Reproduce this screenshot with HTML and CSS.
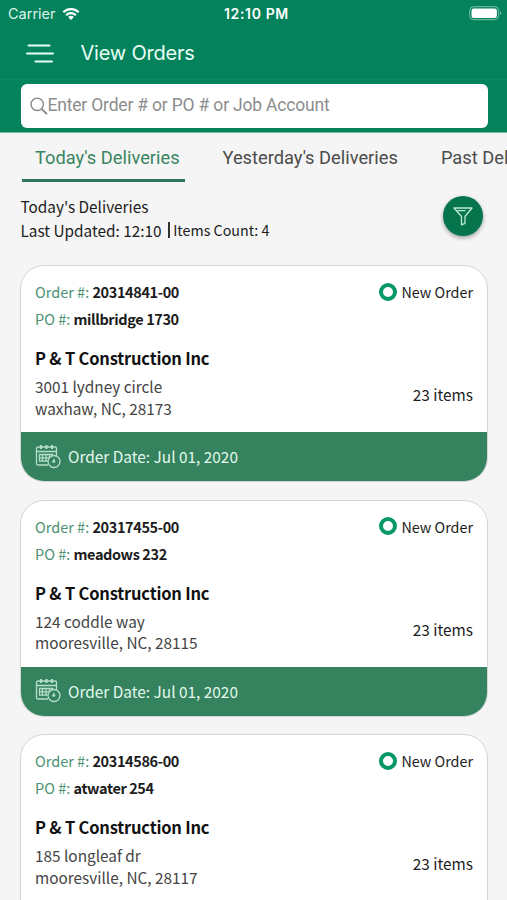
FILE: index.html
```html
<!DOCTYPE html>
<html lang="en">
<head>
<meta charset="utf-8">
<title>View Orders</title>
<link rel="stylesheet" href="styles.css">
</head>
<body>
<svg class="defs" aria-hidden="true">
  <symbol id="calendar" viewBox="0 0 26 26">
    <g fill="none" stroke="currentColor" stroke-width="1.300">
      <path d="M13 21H3a1.500 1.500 0 0 1-1.500-1.500V4.500A1.500 1.500 0 0 1 3 3h17a1.500 1.500 0 0 1 1.500 1.500V11.500M1.500 7.500h20"/>
      <path d="M6 1v4M11.500 1v4M17 1v4" stroke-width="2"/>
      <path d="M4 10.500h14M4 13.800h10M4 17.200h8.500M4.500 10.500v6.700M7.500 10.500v6.700M11 10.500v6.700M14.500 10.500v2.500M18 10.500v1"/>
      <circle cx="19" cy="17.500" r="6"/>
      <path d="M19 14.800v2.700M17.200 17.500h1.800"/>
    </g>
    <circle cx="19" cy="17.500" r="1.300" fill="currentColor"/>
  </symbol>
</svg>
<div class="app">
  <header>
    <div class="status">
      <span class="carrier">Carrier</span>
      <svg class="wifi" viewBox="0 0 18 14" width="18" height="14"><path fill="none" stroke="#fff" stroke-width="2.200" d="M1.300 5.200a11 11 0 0 1 15.400 0M4.100 8.200a7 7 0 0 1 9.800 0"/><path fill="#fff" d="M9 13l-2.900-2.900a4.100 4.100 0 0 1 5.800 0z"/></svg>
      <span class="time">12:10 PM</span>
      <svg class="battery" viewBox="0 0 33 15" width="33" height="15"><rect x=".7" y=".7" width="29" height="13" rx="4" fill="none" stroke="#7fc3a7" stroke-width="1"/><rect x="2.500" y="2.500" width="25.400" height="9.400" rx="2.200" fill="#fff"/><path d="M31.200 5v4.500q2-2.200 0-4.500" fill="#7fc3a7"/></svg>
    </div>
    <div class="titlebar">
      <svg class="menu" viewBox="0 0 28 20" width="28" height="20"><path d="M2.500 2.500h21M1 10.500h26M9.500 18.500h16.500" stroke="#e9fff5" stroke-width="2" stroke-linecap="round"/></svg>
      <h1>View Orders</h1>
    </div>
    <div class="search">
      <svg viewBox="0 0 18 18" width="18" height="18"><g fill="none" stroke="#858585" stroke-width="1.300"><circle cx="7.200" cy="7.300" r="6.200"/><path d="M11.600 11.900l5.400 5.200" stroke-width="1.800"/></g></svg>
      <span>Enter Order # or PO # or Job Account</span>
    </div>
  </header>
  <nav>
    <a class="tab active">Today's Deliveries</a>
    <a class="tab">Yesterday's Deliveries</a>
    <a class="tab">Past Deliveries</a>
  </nav>
  <section class="summary">
    <div>
      <p class="line">Today's Deliveries</p>
      <p class="line"><span>Last Updated: 12:10</span><i class="bar"></i><span class="count">Items Count: 4</span></p>
    </div>
    <div class="filter"><svg viewBox="0 0 20 20" width="20" height="20"><path d="M1 2h18l-7 8.500v6.800l-3.500 1.500v-8.300zM4.500 4.700h8" fill="none" stroke="#bfe9d3" stroke-width="1.300" stroke-linejoin="round"/></svg></div>
  </section>
  <main>
    <article class="card">
      <div class="body">
        <div class="row first"><span class="field"><span class="label">Order #:</span> <b>20314841-00</b></span><span class="state"><i class="ring"></i>New Order</span></div>
        <div class="row"><span class="field"><span class="label po">PO #:</span> <b>millbridge 1730</b></span></div>
        <h2>P &amp; T Construction Inc</h2>
        <div class="place"><address>3001 lydney circle<br>waxhaw, NC, 28173</address><span class="items">23 items</span></div>
      </div>
      <footer><svg width="26" height="26"><use href="#calendar"/></svg><span>Order Date: Jul 01, 2020</span></footer>
    </article>
    <article class="card">
      <div class="body">
        <div class="row first"><span class="field"><span class="label">Order #:</span> <b>20317455-00</b></span><span class="state"><i class="ring"></i>New Order</span></div>
        <div class="row"><span class="field"><span class="label po">PO #:</span> <b>meadows 232</b></span></div>
        <h2>P &amp; T Construction Inc</h2>
        <div class="place"><address>124 coddle way<br>mooresville, NC, 28115</address><span class="items">23 items</span></div>
      </div>
      <footer><svg width="26" height="26"><use href="#calendar"/></svg><span>Order Date: Jul 01, 2020</span></footer>
    </article>
    <article class="card">
      <div class="body">
        <div class="row first"><span class="field"><span class="label">Order #:</span> <b>20314586-00</b></span><span class="state"><i class="ring"></i>New Order</span></div>
        <div class="row"><span class="field"><span class="label po">PO #:</span> <b>atwater 254</b></span></div>
        <h2>P &amp; T Construction Inc</h2>
        <div class="place"><address>185 longleaf dr<br>mooresville, NC, 28117</address><span class="items">23 items</span></div>
      </div>
    </article>
  </main>
</div>
</body>
</html>
```
FILE: styles.css
```css
* { box-sizing: border-box; }
body { margin: 0; background: #f5f5f5; color: #1c1c1c; font-family: "Noto Sans CJK SC", "Noto Sans", sans-serif; }
h1, h2, p { margin: 0; font-weight: 400; }
.defs { position: absolute; width: 0; height: 0; }
.app { width: 507px; height: 900px; overflow: hidden; }
header { height: 133px; background: #03825c; border-bottom: 1px solid #74b8a0; }
.status { height: 27px; display: grid; grid-template-columns: 54px 162px auto 1fr 33px; align-items: center; padding: 0 5px 0 8px; color: #fff; font-family: Inter, sans-serif; font-size: 14px; line-height: 27px; }
.carrier { color: #d9f5e9; font-size: 14.5px; }
.time { grid-column: 3; font-weight: 600; letter-spacing: .65px; white-space: nowrap; }
.battery { grid-column: 5; }
.titlebar { height: 53px; display: flex; align-items: center; padding-left: 26px; border-bottom: 1px solid #0b8963; }
.titlebar h1 { margin-left: 26.500px; color: #e9fff5; font: 400 20px/30px Inter, sans-serif; letter-spacing: -.2px; }
.search { margin: 4px 19.500px 0 20.500px; height: 44px; border-radius: 6px; background: #fff; display: flex; align-items: center; padding-left: 9px; color: #8d8d8d; font: 400 17.500px/44px Roboto, sans-serif; }
.search span { white-space: nowrap; margin-top: -2px; letter-spacing: -.19px; }
nav { height: 49px; display: flex; padding-left: 22px; overflow: hidden; font: 400 18.300px/49px Roboto, sans-serif; color: #4c4c4c; }
.tab { flex: none; white-space: nowrap; height: 49px; line-height: 49px; padding: 0; margin-left: 38px; }
.tab + .tab + .tab { margin-left: 43px; }
.tab.active { margin: 0; width: 162.500px; padding-left: 13px; color: #398562; border-bottom: 3px solid #2d7458; }
.summary { height: 83px; display: flex; justify-content: space-between; padding: 12px 24px 0 20.500px; }
.line { display: flex; align-items: center; height: 24px; font-size: 15.350px; line-height: 24px; white-space: nowrap; }
.bar { width: 2px; height: 16px; margin: 0 3.500px 0 6px; background: #333; }
.count { font-size: 14.300px; }
.filter { width: 40px; height: 40px; margin-top: 2px; border-radius: 50%; background: #06744d; box-shadow: 0 2px 4px rgba(0, 0, 0, .35); display: flex; align-items: center; justify-content: center; }
main { display: flex; flex-direction: column; gap: 17.500px; padding: 0 19px 0 20px; }
.card { height: 217px; border: 1px solid #d4d4d4; border-radius: 24px; background: #fff; overflow: hidden; flex: none; }
.body { height: 166px; padding: 12px 14px 0; }
.row { height: 27px; display: flex; justify-content: space-between; align-items: center; font-size: 14.500px; line-height: 27px; white-space: nowrap; }
.label { color: #4c9273; }
.field b { font-weight: 700; letter-spacing: -.4px; }
.state { display: flex; align-items: center; gap: 4px; font-size: 14.350px; }
.ring { width: 18px; height: 18px; border: 4.500px solid #079965; border-radius: 50%; }
h2 { margin-top: 12px; height: 29px; font-size: 16.500px; letter-spacing: -.2px; line-height: 29px; font-weight: 700; color: #111; white-space: nowrap; }
.place { display: flex; justify-content: space-between; align-items: center; padding-top: 3px; }
address { font-style: normal; font-size: 15.350px; line-height: 21.500px; color: #444; white-space: nowrap; }
.items { font-size: 15.400px; line-height: 22px; margin-top: -7px; }
footer { height: 49px; background: #35825f; color: #e3f8ec; display: flex; align-items: center; padding-left: 14px; gap: 7px; font-size: 15.400px; line-height: 30px; }
footer span { margin-top: -1px; }
footer svg { color: #b5dfc8; }
```
